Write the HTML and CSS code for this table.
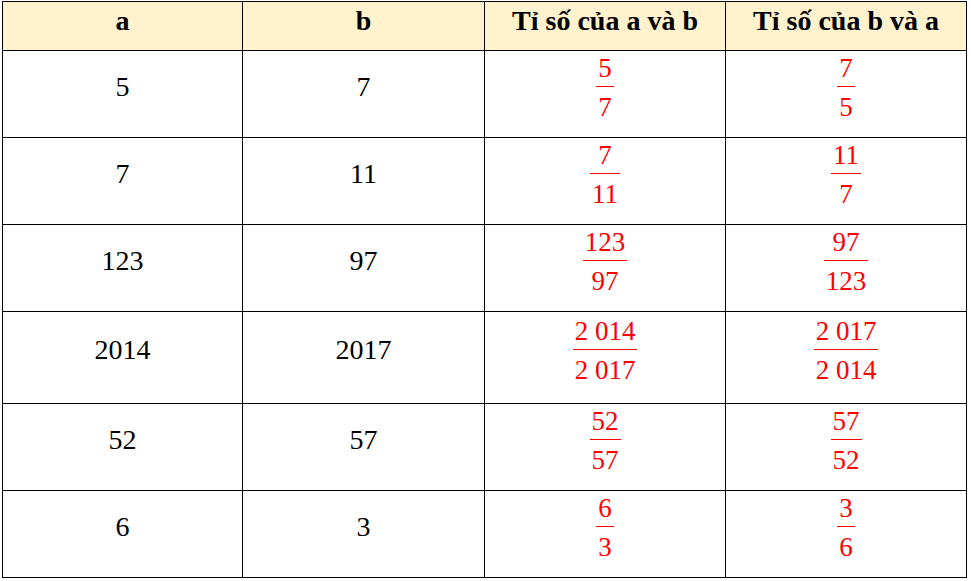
FILE: index.html
```html
<!DOCTYPE html>
<html>
<head>
<meta charset="utf-8">
<link rel="stylesheet" href="styles.css">
</head>
<body>
<table class="ratio-table">
  <colgroup>
    <col class="c1"><col class="c2"><col class="c3"><col class="c4">
  </colgroup>
  <thead>
    <tr class="head">
      <th>a</th><th>b</th><th>Tỉ số của a và b</th><th>Tỉ số của b và a</th>
    </tr>
  </thead>
  <tbody>
    <tr class="row">
      <td>5</td><td>7</td>
      <td><span class="frac"><span class="num">5</span><span class="den">7</span></span></td>
      <td><span class="frac"><span class="num">7</span><span class="den">5</span></span></td>
    </tr>
    <tr class="row">
      <td>7</td><td>11</td>
      <td><span class="frac"><span class="num">7</span><span class="den">11</span></span></td>
      <td><span class="frac"><span class="num">11</span><span class="den">7</span></span></td>
    </tr>
    <tr class="row">
      <td>123</td><td>97</td>
      <td><span class="frac"><span class="num">123</span><span class="den">97</span></span></td>
      <td><span class="frac"><span class="num">97</span><span class="den">123</span></span></td>
    </tr>
    <tr class="row tall">
      <td>2014</td><td>2017</td>
      <td><span class="frac"><span class="num">2 014</span><span class="den">2 017</span></span></td>
      <td><span class="frac"><span class="num">2 017</span><span class="den">2 014</span></span></td>
    </tr>
    <tr class="row">
      <td>52</td><td>57</td>
      <td><span class="frac"><span class="num">52</span><span class="den">57</span></span></td>
      <td><span class="frac"><span class="num">57</span><span class="den">52</span></span></td>
    </tr>
    <tr class="row">
      <td>6</td><td>3</td>
      <td><span class="frac"><span class="num">6</span><span class="den">3</span></span></td>
      <td><span class="frac"><span class="num">3</span><span class="den">6</span></span></td>
    </tr>
  </tbody>
</table>
</body>
</html>
```

FILE: styles.css
```css
html, body {
  margin: 0;
  padding: 0;
  background: #ffffff;
}

body {
  padding: 1px 0 0 2px;
  font-family: "Liberation Serif", "Times New Roman", serif;
  color: #000000;
}

.ratio-table {
  border-collapse: collapse;
  table-layout: fixed;
  width: 964px;
}

.c1 { width: 240px; }
.c2 { width: 242px; }
.c3 { width: 241px; }
.c4 { width: 241px; }

.ratio-table th,
.ratio-table td {
  border: 1px solid #000000;
  text-align: center;
  vertical-align: middle;
  padding: 0;
}

.head th {
  background: #fff2cc;
  height: 49px;
  font-size: 28px;
  font-weight: bold;
  padding-bottom: 11px;
  box-sizing: border-box;
}

.row td {
  height: 87px;
  font-size: 28px;
  padding-bottom: 14px;
  box-sizing: border-box;
}

.row.tall td {
  height: 92px;
  padding-bottom: 15px;
}

.frac {
  display: inline-flex;
  flex-direction: column;
  align-items: stretch;
  color: #ff0000;
  font-size: 27px;
  line-height: 30px;
  vertical-align: middle;
}

.num {
  padding: 0 2px 3px;
  border-bottom: 1px solid #ff0000;
}

.den {
  padding: 5px 2px 0;
}
```
